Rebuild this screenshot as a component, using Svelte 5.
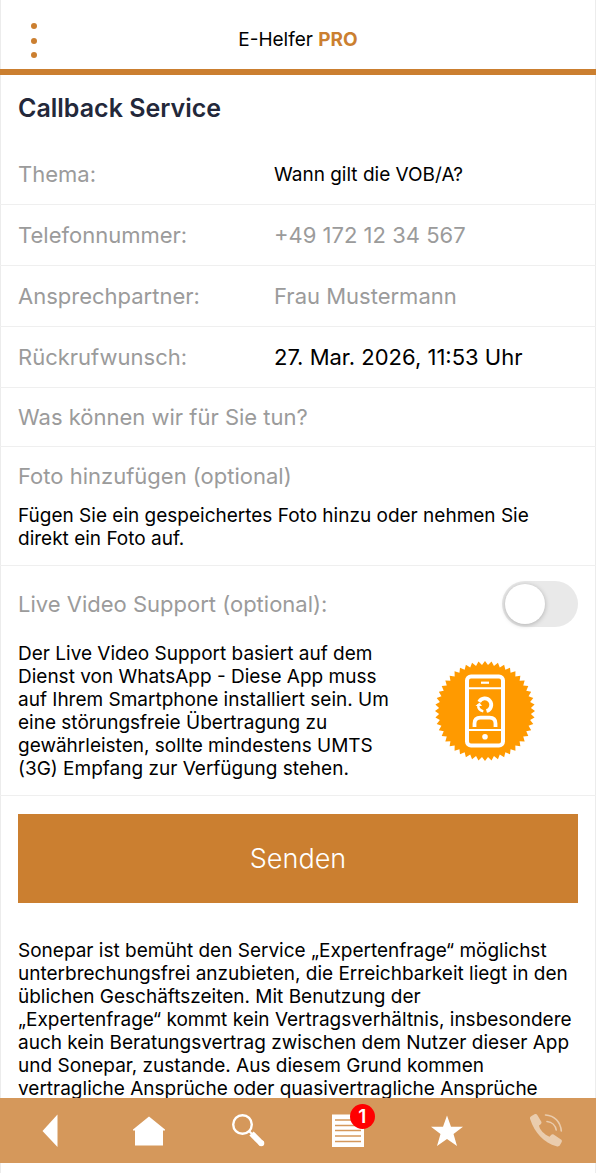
<script>
  const TEETH = 48;
  const seal = Array.from({ length: TEETH * 2 }, (_, i) => {
    const r = i % 2 === 0 ? 50 : 46;
    const a = (Math.PI * i) / TEETH - Math.PI / 2;
    return `${(50 + r * Math.cos(a)).toFixed(2)},${(50 + r * Math.sin(a)).toFixed(2)}`;
  }).join(' ');

  let topic = $state('Wann gilt die VOB/A?');
  let phone = $state('');
  let contact = $state('');
  let callback = $state('27. Mar. 2026, 11:53 Uhr');
  let message = $state('');
  let live = $state(false);
</script>

<div class="page">
  <header>
    <button class="menu" type="button" aria-label="Menü">
      <svg width="8" height="36" viewBox="0 0 8 36" fill="#cb7f30">
        <circle cx="4" cy="4" r="3" /><circle cx="4" cy="19" r="3" /><circle cx="4" cy="33" r="3" />
      </svg>
    </button>
    <div class="brand">E-Helfer <strong>PRO</strong></div>
  </header>

  <main>
    <h1>Callback Service</h1>
    <form onsubmit={(e) => e.preventDefault()}>
      <div class="row">
        <label for="topic">Thema:</label>
        <input id="topic" class="small" bind:value={topic} />
      </div>
      <div class="row">
        <label for="phone">Telefonnummer:</label>
        <input id="phone" type="tel" placeholder="+49 172 12 34 567" bind:value={phone} />
      </div>
      <div class="row">
        <label for="contact">Ansprechpartner:</label>
        <input id="contact" placeholder="Frau Mustermann" bind:value={contact} />
      </div>
      <div class="row">
        <label for="callback">Rückrufwunsch:</label>
        <input id="callback" bind:value={callback} />
      </div>
      <div class="row single">
        <textarea rows="1" aria-label="Was können wir für Sie tun?" placeholder="Was können wir für Sie tun?" bind:value={message}></textarea>
      </div>
      <div class="block photo">
        <button class="link" type="button">Foto hinzufügen (optional)</button>
        <p>Fügen Sie ein gespeichertes Foto hinzu oder nehmen Sie direkt ein Foto auf.</p>
      </div>
      <div class="block live">
        <div class="switch-row">
          <label for="live">Live Video Support (optional):</label>
          <input id="live" class="switch" type="checkbox" role="switch" bind:checked={live} />
        </div>
        <div class="info">
          <p>
            Der Live Video Support basiert auf dem Dienst von WhatsApp - Diese App muss auf Ihrem Smartphone
            installiert sein. Um eine störungsfreie Übertragung zu gewährleisten, sollte mindestens UMTS (3G)
            Empfang zur Verfügung stehen.
          </p>
          <svg class="seal" width="100" height="100" viewBox="0 0 100 100" aria-hidden="true">
            <polygon points={seal} fill="#ff9a00" />
            <g fill="none" stroke="#fff">
              <rect x="32" y="15.500" width="36" height="69" rx="4" stroke-width="4" />
              <path d="M32 27.300H68M32 69H68" stroke-width="2" />
              <path d="M46 21.700H54" stroke-width="2.200" />
              <path d="M44.200 40.800A6.400 6.400 0 1 1 51.500 50" stroke-width="3.800" />
              <path d="M43.200 43.500C43 47 45 49.600 48.300 50.300" stroke-width="2.400" />
              <path d="M39.500 66V62.500Q39.500 56.700 45.500 56.700H54.500Q60.500 56.700 60.500 62.500V66" stroke-width="3.800" />
            </g>
            <path d="M40.500 45L44.500 41.500L47 45Z" fill="#fff" />
            <circle cx="50" cy="75.700" r="2.800" fill="#fff" />
          </svg>
        </div>
      </div>
      <button class="send" type="submit">Senden</button>
    </form>
    <p class="legal">
      Sonepar ist bemüht den Service „Expertenfrage“ möglichst unterbrechungsfrei anzubieten, die Erreichbarkeit
      liegt in den üblichen Geschäftszeiten. Mit Benutzung der<br />„Expertenfrage“ kommt kein Vertragsverhältnis,
      insbesondere auch kein Beratungsvertrag zwischen dem Nutzer dieser App und Sonepar, zustande. Aus diesem
      Grund kommen vertragliche Ansprüche oder quasivertragliche Ansprüche
    </p>
  </main>

  <nav>
    <a href="#back" aria-label="Zurück">
      <svg width="36" height="36" viewBox="0 0 36 36" fill="#fff"><path d="M10.500 18L25.500 1.500V34Z" /></svg>
    </a>
    <a href="#home" aria-label="Start">
      <svg width="36" height="36" viewBox="0 0 36 36" fill="#fff"><path d="M18 3.500L34 16.500V17.500H32V32.500H4V17.500H2V16.500Z" /></svg>
    </a>
    <a href="#search" aria-label="Suche">
      <svg width="36" height="36" viewBox="0 0 36 36" fill="none" stroke="#fff">
        <circle cx="12.500" cy="11.500" r="9.300" stroke-width="2.400" />
        <path d="M19 18L22 21" stroke-width="2" />
        <path d="M21.500 20.500L31.500 30.500" stroke-width="6" />
        <circle cx="31.300" cy="30.300" r="1.500" stroke-width="3" />
      </svg>
    </a>
    <a href="#news" aria-label="Nachrichten">
      <svg width="36" height="36" viewBox="0 0 36 36">
        <path fill="#fff" d="M2 1.500H34V34H2Z" />
        <path stroke="#d5985b" stroke-width="1.600" d="M5 7H31M5 12.500H31M5 17.500H31M5 23H31M5 28.500H31" />
      </svg>
      <span class="badge">1</span>
    </a>
    <a href="#favorites" aria-label="Favoriten">
      <svg width="36" height="36" viewBox="0 0 36 36" fill="#fff">
        <path d="M18 2.500L22 13.700H34L24.500 21L28 33L18 26L8 33L11.500 21L2 13.700H14Z" />
      </svg>
    </a>
    <a href="#call" aria-label="Anrufen">
      <svg width="36" height="36" viewBox="0 0 36 36" fill="none" stroke="#eaccad">
        <path fill="#eaccad" stroke="none" d="M2.300 6.500C1.500 5 2 4 3.500 3L6.500 1.300C7.700 .7 8.700 1 9.300 2L13.200 8.600C13.800 9.600 13.500 10.500 12.700 11.200L11 12.600C11.500 16.500 16.500 22 21.500 23.700L23.300 21.800C24 21.100 24.800 21 25.600 21.500L33 26.500C34 27.200 34.200 28 33.700 29L32 32C31.200 33.400 30 33.700 28.500 33.200C16 30 6.500 19.500 2.300 6.500Z" />
        <path stroke-width="1.600" stroke-linecap="round" d="M17.500 2C26.500 2.500 32.500 9 33.300 18M19 8.500C24 9 27.500 12.500 28.200 17" />
      </svg>
    </a>
  </nav>
</div>

<style>
  :global(body) { margin: 0; background: #fff; }
  .page {
    box-sizing: border-box;
    height: 100vh;
    display: flex;
    flex-direction: column;
    padding-bottom: 10px;
    font-family: Inter, "Liberation Sans", sans-serif;
    font-size: 19px;
    line-height: 23px;
    color: #000;
    background: #fff;
    box-shadow: inset 1px 0 #ececec, inset -1px 0 #ececec;
  }
  header {
    display: grid;
    grid-template-columns: 1fr auto 1fr;
    align-items: center;
    min-height: 59px;
    padding: 10px 18px 0;
    border-bottom: 6px solid #cb7f30;
    flex: none;
  }
  button, input, textarea { font: inherit; color: inherit; border: 0; padding: 0; margin: 0; background: none; }
  .menu { display: flex; justify-self: start; padding: 0 12px; }
  header strong { color: #cb7f30; font-weight: 700; }
  main { flex: 1; min-height: 0; overflow: hidden; }
  h1 { margin: 0; padding: 18px 18px 21px; font-size: 25px; line-height: 30px; font-weight: 600; color: #23283a; }
  .row {
    display: grid;
    grid-template-columns: 256px 1fr;
    align-items: center;
    min-height: 60px;
    padding: 0 18px;
    font-size: 22px;
    line-height: 28px;
    border-bottom: 1px solid #efefef;
  }
  .row.single { grid-template-columns: 1fr; min-height: 58px; }
  .row input { width: 100%; min-width: 0; height: 30px; }
  .row .small { font-size: 19px; }
  textarea { display: block; resize: none; height: 28px; overflow: hidden; }
  label, .link { color: #9b9b9b; font-size: 22px; line-height: 28px; }
  ::placeholder { color: #9b9b9b; opacity: 1; }
  p { margin: 0; }
  .block { padding: 15px 18px; border-bottom: 1px solid #efefef; }
  .photo p { padding-top: 14px; }
  .link { display: block; }
  .switch-row { display: flex; align-items: center; justify-content: space-between; }
  .switch {
    appearance: none;
    position: relative;
    width: 76px;
    height: 46px;
    border-radius: 23px;
    background: #e9e9e9;
  }
  .switch::before {
    content: "";
    position: absolute;
    top: 3px;
    left: 3px;
    width: 40px;
    height: 40px;
    border-radius: 50%;
    background: #fff;
    box-shadow: 0 1px 5px rgba(0, 0, 0, 0.25);
  }
  .switch:checked { background: #cb7f30; }
  .switch:checked::before { left: 33px; }
  .info { display: grid; grid-template-columns: 2fr 1fr; align-items: center; padding-top: 15px; }
  .seal { justify-self: center; }
  .send {
    display: block;
    width: calc(100% - 36px);
    margin: 18px;
    height: 89px;
    background: #cb7f30;
    color: #fff;
    font-size: 27px;
    font-weight: 300;
  }
  .legal { padding: 18px 18px 0; }
  nav {
    flex: none;
    display: grid;
    grid-template-columns: repeat(6, 1fr);
    align-items: center;
    height: 65px;
    background: #d5985b;
  }
  nav a { display: block; position: relative; width: 36px; height: 36px; margin: 0 auto; }
  nav svg { display: block; }
  .badge {
    position: absolute;
    top: -9px;
    right: -9px;
    width: 25px;
    height: 25px;
    border-radius: 50%;
    background: #f00;
    color: #fff;
    font-size: 19px;
    line-height: 25px;
    font-weight: 600;
    text-align: center;
  }
</style>
